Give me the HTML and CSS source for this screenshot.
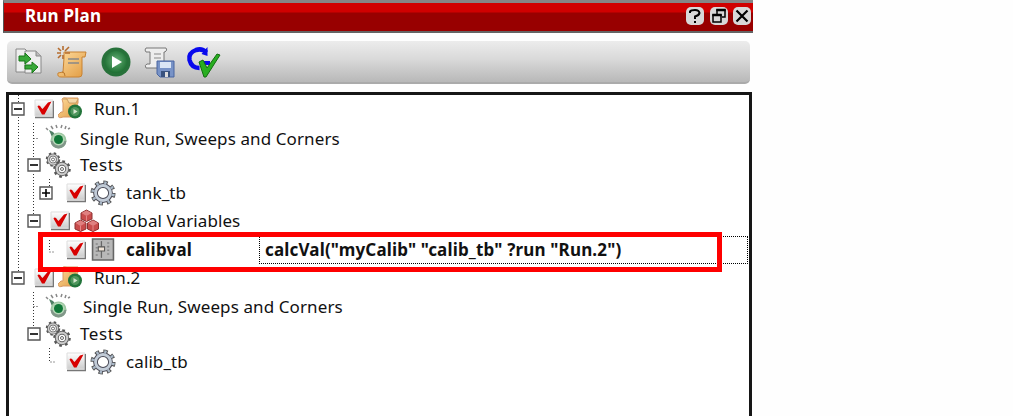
FILE: index.html
```html
<!DOCTYPE html>
<html lang="en">
<head>
<meta charset="utf-8">
<title>Run Plan</title>
<link rel="stylesheet" href="styles.css">
</head>
<body>
<svg class="defs" width="0" height="0">
  <defs>
    <linearGradient id="box" x1="0" y1="0" x2="0" y2="1"><stop offset="0" stop-color="#fff"/><stop offset="1" stop-color="#ccc"/></linearGradient>
    <linearGradient id="paper" x1="0" y1="0" x2="1" y2="1"><stop offset="0" stop-color="#ffdda0"/><stop offset="1" stop-color="#e09a40"/></linearGradient>
    <radialGradient id="green" cx=".5" cy=".45" r=".6"><stop offset="0" stop-color="#68b078"/><stop offset="1" stop-color="#176a2c"/></radialGradient>
    <symbol id="minus" viewBox="0 0 14 14"><path d="M1 1h12v12H1z" fill="#fff" stroke="#555" stroke-width="1.4"/><path d="M3 7h8" stroke="#000" stroke-width="1.6"/></symbol>
    <symbol id="plus" viewBox="0 0 14 14"><path d="M1 1h12v12H1z" fill="#fff" stroke="#555" stroke-width="1.4"/><path d="M3 7h8M7 3v8" stroke="#000" stroke-width="1.6"/></symbol>
    <symbol id="check" viewBox="0 0 20 20"><path d="M1 1h18v16H1z" fill="url(#box)" stroke="#ddd"/><path d="M1 18.500h18.500V2" fill="none" stroke="#777" stroke-width="1.600"/><path d="M3.500 7.500Q5 5 7.500 9L8.500 10 14 3.500l3.500-1L10.500 15.500H8z" fill="#d80000"/></symbol>
    <symbol id="run" viewBox="0 0 26 24"><path d="M4 2Q5 0 9 1h11v5l-1 2v12H5q-5 2-5-2l3-3h2V6z" fill="url(#paper)" stroke="#d99a65"/><path d="M5 2h4l2 4h7l2-4" fill="#f5d8a8" stroke="#b88c55" stroke-width=".7"/><circle cx="17" cy="14.500" r="7" fill="#22743a"/><circle cx="17" cy="14.500" r="4.500" fill="#4f965c"/><path d="M15.500 12l4 2.500-4 2.500z" fill="#d5e6cf"/></symbol>
    <symbol id="lamp" viewBox="0 0 26 26"><path d="M1 4l2 2M6 2l2 3M11 1l1 3M17 1l-1 3M21 2l-1 3M25 4l-2 1" stroke="#888" stroke-width="1.500"/><path d="M4 6l4 2 6 7-5 3z" fill="#4f8064"/><circle cx="13.500" cy="16.500" r="8" fill="#9cc6a0"/><path d="M5.500 17q1 7 8 7.500 7-.5 8-7.500" fill="#82968a"/><circle cx="13.500" cy="15.500" r="6" fill="#b5d8b7"/><circle cx="13.500" cy="15.500" r="4.500" fill="#107838"/></symbol>
    <symbol id="gear" viewBox="0 0 26 26"><g fill="none"><circle cx="13" cy="13" r="10.300" stroke="#555" stroke-width="4.500" stroke-dasharray="4.200 3.890"/><circle cx="13" cy="13" r="7.500" stroke="#4c4c58" stroke-width="4.800"/><circle cx="13" cy="13" r="10.300" stroke="#a9b8c8" stroke-width="3" stroke-dasharray="2.200 5.890" stroke-dashoffset="-1"/><circle cx="13" cy="13" r="7.500" stroke="#c2ccd8" stroke-width="2.800"/></g></symbol>
    <symbol id="gears" viewBox="0 0 26 26"><g fill="none"><circle cx="8" cy="7.500" r="6" stroke="#555" stroke-width="2.500" stroke-dasharray="2.300 2.412"/><circle cx="8" cy="7.500" r="4.500" stroke="#666" stroke-width="3.200"/><circle cx="8" cy="7.500" r="4.500" stroke="#ccc" stroke-width="1.500"/><circle cx="8" cy="7.500" r="1.500" stroke="#666"/><circle cx="17" cy="17" r="7.300" stroke="#555" stroke-width="3" stroke-dasharray="2.600 3.133"/><circle cx="17" cy="17" r="5.200" stroke="#666" stroke-width="4"/><circle cx="17" cy="17" r="5.200" stroke="#ccc" stroke-width="2"/><circle cx="17" cy="17" r="1.500" stroke="#666"/></g></symbol>
    <symbol id="cube" viewBox="0 0 13 13"><path d="M1 4l5.500-3L12 4v6l-5.500 2.500L1 10z" fill="#c94c4c" stroke="#8d3030"/><path d="M1.500 4l5-2.500 5 2.500-5 3z" fill="#e08080"/><path d="M6.500 7v5" stroke="#e58888"/></symbol>
    <symbol id="cubes" viewBox="0 0 26 24"><use href="#cube" x="6" y="0" width="13" height="13"/><use href="#cube" x="0" y="10" width="13" height="13"/><use href="#cube" x="12.500" y="10" width="13" height="13"/></symbol>
    <symbol id="variable" viewBox="0 0 22 22"><path d="M1 1h20v20H1z" fill="#b8b8b8" stroke="#666" stroke-width="1.500"/><path d="M9.500 3v16" stroke="#666" stroke-width="1.200"/><path d="M5 5v13M16 4v14" stroke="#888" stroke-width="2" stroke-dasharray="1.500 2"/><path d="M6.500 8.500h6v4h-6z" fill="#eee2d5" stroke="#555"/></symbol>
  </defs>
</svg>
<main class="panel">
  <header class="titlebar">
    <h1 class="title">Run Plan</h1>
    <div class="controls">
      <svg class="control" viewBox="0 0 20 20"><rect x="1" y="1" width="18" height="18" rx="5" fill="#d8d8d8"/><path d="M5 7V5.500Q6 4 10 4t4.500 3Q14 9.500 10 10.500V13M10 15v2" fill="none" stroke="#000" stroke-width="2"/></svg>
      <svg class="control" viewBox="0 0 20 20"><rect x="1" y="1" width="18" height="18" rx="5" fill="#d8d8d8"/><path d="M8 8V4h8v7h-3M4 9h8v7H4z" fill="none" stroke="#000" stroke-width="1.500"/><path d="M7.300 4h9.400M3.300 9h9.400" stroke="#000" stroke-width="2.500"/></svg>
      <svg class="control" viewBox="0 0 20 20"><rect x="1" y="1" width="18" height="18" rx="5" fill="#d8d8d8"/><path d="M4.500 4.500l11 11M15.500 4.500l-11 11" stroke="#000" stroke-width="2.200"/></svg>
    </div>
  </header>
  <nav class="toolbar">
    <svg class="tool" viewBox="0 0 32 32"><g stroke="#888" fill="#eee"><path d="M3 3h9l4 4v19H3z"/><path d="M12 5h11l5 5v17H12z"/><path d="M23 5v5h5" fill="#bbb"/></g><path d="M6 10h6V7l6 6-6 5v-3H6zM12 19h7v-3l6 5-6 6v-4h-7z" fill="#38a838" stroke="#187818"/></svg>
    <svg class="tool" viewBox="0 0 32 32"><path d="M8 6h22l-1 5h-3v17q0 3-3 3H5q-4 0-3-4l5-1 1-14z" fill="url(#paper)" stroke="#c88232"/><path d="M6 26q3 0 3 4" fill="none" stroke="#b8762c"/><path d="M12 13h11M12 17h11" stroke="#888" stroke-width="1.500"/><path d="M1 7h4M9 7h5M7 0v4M7 9v4M2 2l3 3M9 5l4-4M2 12l3-3" stroke="#b56d30" stroke-width="1.600"/></svg>
    <svg class="tool" viewBox="0 0 32 32"><circle cx="16" cy="16" r="14.500" fill="#27713a"/><circle cx="16" cy="16" r="11" fill="url(#green)"/><path d="M12 10l10 6-10 6z" fill="#fff"/></svg>
    <svg class="tool" viewBox="0 0 32 32"><path d="M3 2h20q2 2-1 4h-1v13q0 3-4 3H3q-2-3 1-4h3V6H3q-2-2 0-4z" fill="#eee" stroke="#777"/><path d="M11 8h7M11 12h7" stroke="#aaa" stroke-width="1.500"/><path d="M14 15h17v16H17l-3-3z" fill="#7893c7" stroke="#4965a0"/><path d="M17 16h11v6H17z" fill="#dbe6f5"/><path d="M18 25h9v6h-9z" fill="#38527e"/><path d="M22 26h3v5h-3z" fill="#ddd"/></svg>
    <svg class="tool" viewBox="0 0 32 32"><path d="M19.500 6.500Q15 2 9 4 1 7 2.500 14q2 8 10 8" fill="none" stroke="#0808ed" stroke-width="4.500"/><path d="M20.500 1v9l-6-2zM17 15h6v4h-6z" fill="#0808ed"/><path d="M12 16l4-2 4 8L30 8l3 1-14 22h-2z" fill="#28ae20" stroke="#126c10"/></svg>
  </nav>
  <section class="tree">
    <svg class="guides" width="120" height="320" viewBox="9 95 120 320"><path d="M18.500 95v8M18.500 117v155M33.500 123v37M33.500 138.500h6M33.500 174v41M49.500 179v8M49.500 240v12h6M33.500 292v36M33.500 306.500h6M49.500 348v14h6"/></svg>
    <div class="row"><svg class="expander"><use href="#minus"/></svg><svg class="checkbox"><use href="#check"/></svg><svg class="icon"><use href="#run"/></svg><span class="label">Run.1</span></div>
    <div class="row child leaf"><svg class="icon"><use href="#lamp"/></svg><span class="label sweep">Single Run, Sweeps and Corners</span></div>
    <div class="row child"><svg class="expander"><use href="#minus"/></svg><svg class="icon"><use href="#gears"/></svg><span class="label tests">Tests</span></div>
    <div class="row grandchild"><svg class="expander"><use href="#plus"/></svg><svg class="checkbox"><use href="#check"/></svg><svg class="icon"><use href="#gear"/></svg><span class="label">tank_tb</span></div>
    <div class="row child"><svg class="expander"><use href="#minus"/></svg><svg class="checkbox"><use href="#check"/></svg><svg class="icon"><use href="#cubes"/></svg><span class="label">Global Variables</span></div>
    <div class="row grandchild leaf"><svg class="checkbox"><use href="#check"/></svg><svg class="icon variable"><use href="#variable"/></svg><span class="label name">calibval</span><span class="value">calcVal("myCalib" "calib_tb" ?run "Run.2")</span></div>
    <div class="row"><svg class="expander"><use href="#minus"/></svg><svg class="checkbox"><use href="#check"/></svg><svg class="icon"><use href="#run"/></svg><span class="label">Run.2</span></div>
    <div class="row child leaf"><svg class="icon"><use href="#lamp"/></svg><span class="label sweep second">Single Run, Sweeps and Corners</span></div>
    <div class="row child"><svg class="expander"><use href="#minus"/></svg><svg class="icon"><use href="#gears"/></svg><span class="label tests">Tests</span></div>
    <div class="row grandchild leaf"><svg class="checkbox"><use href="#check"/></svg><svg class="icon"><use href="#gear"/></svg><span class="label">calib_tb</span></div>
    <div class="highlight"></div>
  </section>
</main>
</body>
</html>
```
FILE: styles.css
```css
* { box-sizing: border-box; }
body { margin: 0; background: #fefefe; font: 17px/22px "Noto Sans", "Open Sans", sans-serif; letter-spacing: .1px; color: #111; overflow: hidden; }
svg { flex: none; }
.defs { position: absolute; }
.panel { width: 753px; height: 416px; padding-left: 3px; display: flex; flex-direction: column; }
.titlebar { height: 33px; flex: none; display: flex; align-items: center; justify-content: space-between; padding: 0 0 3px 21px; border-top: 3px solid #858585; border-bottom: 2px solid #646464; border-left: 1px solid #555; background: linear-gradient(#d00000 0 9px, #980000 10px); }
.title { margin: 0; color: #fff; font-size: 17px; line-height: 24px; letter-spacing: .2px; }
.controls { display: flex; gap: 3.5px; margin-right: 1px; }
.control { width: 20px; height: 20px; }
.toolbar { height: 43px; width: 743px; margin: 8px 0 8px 4px; flex: none; display: flex; align-items: center; gap: 11.4px; padding-left: 6px; border-radius: 5px; border-bottom: 2px solid #aaa; background: linear-gradient(#ececec, #d9d9d9 45%, #b8b8b8); }
.tool { width: 32px; height: 32px; overflow: visible; }
.tree { position: relative; flex: 1; width: 746px; margin-left: 3px; border: 3px solid #161616; border-bottom: 0; background: #fff; }
.guides { position: absolute; left: 0; top: 0; fill: none; stroke: #333; stroke-width: 1; stroke-dasharray: 1 2; }
.row { height: 28.1px; padding-left: 2px; display: flex; align-items: center; position: relative; white-space: nowrap; }
.child { padding-left: 18px; }
.grandchild { padding-left: 30px; }
.child.leaf { padding-left: 36px; }
.grandchild.leaf { padding-left: 56px; }
.expander { width: 14px; height: 14px; }
.checkbox { width: 20px; height: 20px; margin-left: 9px; }
.grandchild .checkbox { margin-left: 13px; }
.grandchild.leaf .checkbox { margin-left: 1px; }
.icon { width: 26px; height: 26px; margin-left: 4px; }
.icon.variable { height: 23px; }
.child.leaf .icon { margin-left: 0; }
.label { margin-left: 10px; }
.tests { margin-left: 9px; letter-spacing: .6px; }
.sweep { margin-left: 9px; padding-top: 3px; }
.second { margin-left: 12px; }
.name { width: 133px; font-weight: bold; letter-spacing: .2px; }
.value { flex: 1; height: 28px; margin-right: 1px; padding-left: 5px; line-height: 25px; border: 1px dotted #000; font-weight: bold; letter-spacing: .17px; }
.highlight { position: absolute; left: 29px; top: 137px; width: 684px; height: 40px; border: 5px solid #f00; }
```
